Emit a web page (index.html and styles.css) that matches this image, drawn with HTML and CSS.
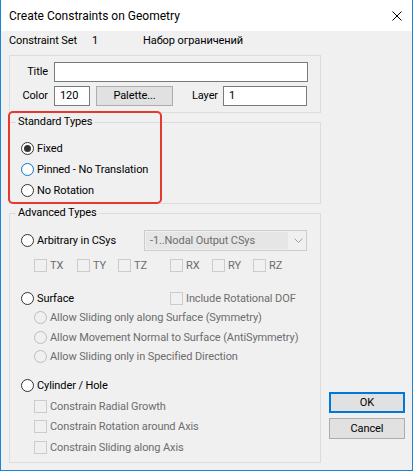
FILE: index.html
```html
<!DOCTYPE html>
<html>
<head>
<meta charset="utf-8">
<link rel="stylesheet" href="styles.css">
</head>
<body>
<div class="window">
  <div class="titlebar">
    <span class="title">Create Constraints on Geometry</span>
    <svg class="close" width="10" height="10" viewBox="0 0 10 10"><path d="M0.5 0.5 L9.5 9.5 M9.5 0.5 L0.5 9.5" stroke="#000" stroke-width="1"/></svg>
  </div>
  <div class="body">
    <div class="header">
      <span class="h-label">Constraint Set</span>
      <span class="h-num">1</span>
      <span>Набор ограничений</span>
    </div>
    <div class="main">
      <div class="left">
        <div class="box-top">
          <span class="lbl">Title</span>
          <div class="field"></div>
          <span class="lbl">Color</span>
          <div class="row2">
            <div class="field f-color">120</div>
            <div class="btn btn-palette">Palette...</div>
            <span class="lbl lbl-layer">Layer</span>
            <div class="field f-layer">1</div>
          </div>
        </div>

        <div class="std-wrap">
          <fieldset class="group">
            <legend>Standard Types</legend>
            <div class="std-list">
              <div class="opt row21"><span class="radio checked"></span><span>Fixed</span></div>
              <div class="opt row21"><span class="radio hover"></span><span>Pinned - No Translation</span></div>
              <div class="opt row21"><span class="radio"></span><span>No Rotation</span></div>
            </div>
          </fieldset>
          <div class="highlight"></div>
        </div>

        <fieldset class="group adv">
          <legend>Advanced Types</legend>
          <div class="adv-list">
            <div class="arb-row">
              <div class="opt arb-opt"><span class="radio"></span><span>Arbitrary in CSys</span></div>
              <div class="combo">
                <span class="combo-text">-1..Nodal Output CSys</span>
                <svg class="chev" width="9" height="5" viewBox="0 0 9 5"><path d="M0.5 0.5 L4.5 4.5 L8.5 0.5" fill="none" stroke="#a0a0a0" stroke-width="1"/></svg>
              </div>
            </div>
            <div class="dof-row">
              <div class="opt dis c-tx"><span class="check"></span><span>TX</span></div>
              <div class="opt dis c-ty"><span class="check"></span><span>TY</span></div>
              <div class="opt dis c-tz"><span class="check"></span><span>TZ</span></div>
              <div class="opt dis c-rx"><span class="check"></span><span>RX</span></div>
              <div class="opt dis c-ry"><span class="check"></span><span>RY</span></div>
              <div class="opt dis"><span class="check"></span><span>RZ</span></div>
            </div>
            <div class="surf-row">
              <div class="opt surf-opt"><span class="radio"></span><span>Surface</span></div>
              <div class="opt dis"><span class="check"></span><span>Include Rotational DOF</span></div>
            </div>
            <div class="sub-list">
              <div class="opt dis sub"><span class="radio dis-radio"></span><span>Allow Sliding only along Surface (Symmetry)</span></div>
              <div class="opt dis sub"><span class="radio dis-radio"></span><span>Allow Movement Normal to Surface (AntiSymmetry)</span></div>
              <div class="opt dis sub"><span class="radio dis-radio"></span><span>Allow Sliding only in Specified Direction</span></div>
            </div>
            <div class="opt cyl-row"><span class="radio"></span><span>Cylinder / Hole</span></div>
            <div class="cyl-list">
              <div class="opt dis cyl"><span class="check"></span><span>Constrain Radial Growth</span></div>
              <div class="opt dis cyl"><span class="check"></span><span>Constrain Rotation around Axis</span></div>
              <div class="opt dis cyl"><span class="check"></span><span>Constrain Sliding along Axis</span></div>
            </div>
          </div>
        </fieldset>
      </div>
      <div class="right">
        <div class="btn btn-ok">OK</div>
        <div class="btn btn-cancel">Cancel</div>
      </div>
    </div>
  </div>
</div>
</body>
</html>
```

FILE: styles.css
```css
html, body {
  margin: 0;
  padding: 0;
  background: #ffffff;
}
body {
  font-family: Roboto, "Noto Sans", sans-serif;
  font-size: 11px;
  letter-spacing: -0.1px;
  color: #000;
}
.window {
  width: 413px;
  height: 471px;
  box-sizing: border-box;
  border: 1px solid #1883d7;
  border-top: 0;
  background: #f0f0f0;
  display: flex;
  flex-direction: column;
}
.titlebar {
  height: 31px;
  flex: none;
  background: #fff;
  display: flex;
  align-items: center;
  justify-content: space-between;
  padding: 0 10px 0 8px;
}
.title {
  font-size: 12px;
  letter-spacing: 0;
  line-height: 16px;
}
.close {
  display: block;
}
.body {
  flex: 1;
  padding: 0 7px 0 8px;
  display: flex;
  flex-direction: column;
}
.header {
  margin-top: 2px;
  height: 16px;
  line-height: 16px;
  display: flex;
}
.h-label { width: 83px; }
.h-num { width: 51px; }

.main {
  display: flex;
  gap: 8px;
  margin-top: 6px;
  align-items: flex-end;
}
.left {
  width: 312px;
  display: flex;
  flex-direction: column;
}
.right {
  width: 76px;
  display: flex;
  flex-direction: column;
  gap: 5px;
  margin-bottom: 24px;
}

.box-top {
  border: 1px solid #dcdcdc;
  padding: 6px 12px 6px 0;
  display: grid;
  grid-template-columns: 38px 1fr;
  column-gap: 6px;
  row-gap: 4px;
}
.lbl {
  text-align: right;
  line-height: 20px;
  height: 20px;
}
.field {
  height: 20px;
  box-sizing: border-box;
  border: 1px solid #7a7a7a;
  background: #fff;
  padding-left: 5px;
  line-height: 18px;
}
.row2 {
  display: flex;
  align-items: center;
}
.f-color { width: 36px; }
.btn-palette { width: 77px; margin-left: 6px; }
.lbl-layer { width: 45px; margin-right: 5px; }
.f-layer { width: 84px; }

.btn {
  box-sizing: border-box;
  height: 20px;
  border: 1px solid #adadad;
  background: #e1e1e1;
  text-align: center;
  line-height: 18px;
}
.btn-ok {
  height: 21px;
  border: 2px solid #0078d7;
  line-height: 17px;
}
.btn-cancel {
  height: 21px;
  line-height: 19px;
}

.group {
  margin: 0;
  padding: 0;
  border: 1px solid #dcdcdc;
  min-width: 0;
}
.group legend {
  margin-left: 6px;
  padding: 0 2px;
  line-height: 16px;
  height: 16px;
}
.std-wrap {
  position: relative;
  margin-top: 1px;
}
.std-list {
  padding: 8px 0 2px 11px;
}
.row21 { height: 21px; }
.highlight {
  position: absolute;
  left: -1px;
  top: -3px;
  width: 154px;
  height: 93px;
  box-sizing: border-box;
  border: 2px solid #e5392f;
  border-radius: 5px;
  pointer-events: none;
}

.opt {
  display: flex;
  align-items: center;
  gap: 3px;
  white-space: nowrap;
}
.radio {
  width: 13px;
  height: 13px;
  flex: none;
  box-sizing: border-box;
  border: 1px solid #333;
  border-radius: 50%;
  background: #fff;
  position: relative;
}
.radio.checked::after {
  content: "";
  position: absolute;
  left: 2px;
  top: 2px;
  width: 7px;
  height: 7px;
  border-radius: 50%;
  background: #333;
}
.radio.hover {
  border-color: #0078d7;
}
.radio.dis-radio {
  border-color: #bcbcbc;
  background: #f0f0f0;
}
.check {
  width: 13px;
  height: 13px;
  flex: none;
  box-sizing: border-box;
  border: 1px solid #cccccc;
  background: #f0f0f0;
}
.dis {
  color: #6d6d6d;
}

.adv {
  margin-top: 1px;
}
.adv-list {
  padding: 9px 12px 4.5px 11px;
}
.arb-row {
  display: flex;
  align-items: center;
  height: 21px;
}
.arb-opt { width: 123px; }
.combo {
  width: 163px;
  height: 21px;
  box-sizing: border-box;
  border: 1px solid #cccccc;
  background: #f0f0f0;
  padding: 1px;
  display: flex;
  align-items: center;
}
.combo-text {
  width: 142px;
  height: 17px;
  line-height: 17px;
  background: #e6e6e6;
  color: #6d6d6d;
  padding-left: 4px;
  box-sizing: border-box;
}
.chev {
  margin-left: 6px;
}
.dof-row {
  display: flex;
  height: 20px;
  margin-top: 4px;
  padding-left: 13px;
}
.c-tx { width: 43px; }
.c-ty { width: 41px; }
.c-tz { width: 52px; }
.c-rx { width: 42px; }
.c-ry { width: 41px; }

.surf-row {
  display: flex;
  height: 20px;
  margin-top: 13px;
}
.surf-opt { width: 149px; }
.sub-list {
  padding-left: 13px;
}
.sub { height: 19.5px; }
.cyl-row {
  height: 20px;
  margin-top: 8.5px;
}
.cyl-list {
  padding-left: 13px;
  margin-top: 1px;
}
.cyl { height: 20.5px; }
```
